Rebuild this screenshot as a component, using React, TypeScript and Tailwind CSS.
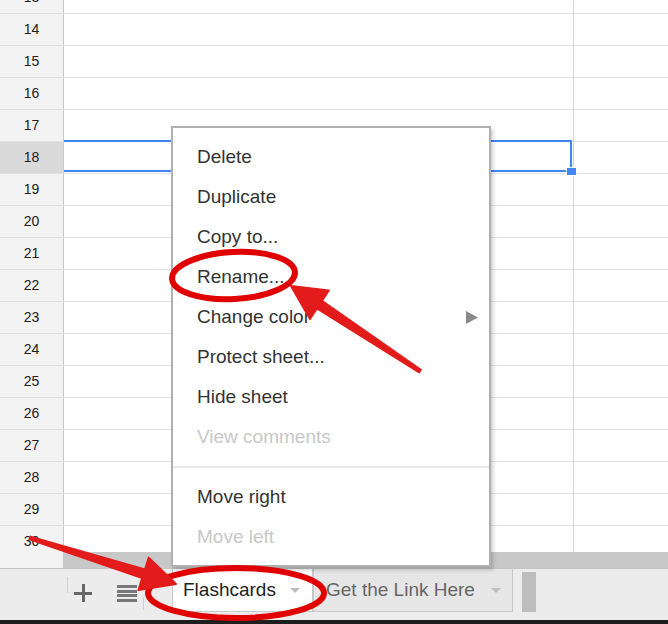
import React from "react";

const rows = Array.from({ length: 18 }, (_, i) => 13 + i);

const menu: { label: string; disabled?: boolean; sub?: boolean }[] = [
  { label: "Delete" },
  { label: "Duplicate" },
  { label: "Copy to..." },
  { label: "Rename..." },
  { label: "Change color", sub: true },
  { label: "Protect sheet..." },
  { label: "Hide sheet" },
  { label: "View comments", disabled: true },
];

const menuBottom = [{ label: "Move right" }, { label: "Move left", disabled: true }];

const Caret = () => (
  <span className="inline-block h-0 w-0 border-x-[5px] border-t-[5px] border-x-transparent border-t-[#bdbdbd]" />
);

const MenuItem = ({ label, disabled, sub }: { label: string; disabled?: boolean; sub?: boolean }) => (
  <div
    className={`flex h-[40px] items-center justify-between pl-[24px] pr-[11px] text-[19px] ${
      disabled ? "text-[#c8c8c8]" : "text-[#333]"
    }`}
  >
    <span>{label}</span>
    {sub && (
      <svg width="12" height="13" viewBox="0 0 12 13">
        <path d="M0 0 L12 6.5 L0 13 Z" fill="#8a8a8a" />
      </svg>
    )}
  </div>
);

export default function App() {
  return (
    <div className="relative h-[624px] w-[668px] overflow-hidden bg-white font-['Liberation_Sans',Arial,sans-serif]">
      {/* grid */}
      <div className="h-[552px] overflow-hidden">
        <div className="-mt-[18px]">
          {rows.map((n) => (
            <div key={n} className="flex h-[32px]">
              <div
                className={`flex w-[64px] shrink-0 items-center justify-center border-b border-r border-b-[#e0e0e0] border-r-[#c9c9c9] text-[14px] text-[#222] ${
                  n === 18 ? "bg-[#dadada]" : "bg-[#f3f3f3]"
                }`}
              >
                {n}
              </div>
              <div className="w-[510px] shrink-0 border-b border-r border-b-[#e2e2e2] border-r-[#d6d6d6]" />
              <div className="flex-1 border-b border-b-[#e2e2e2]" />
            </div>
          ))}
        </div>
      </div>

      {/* selection */}
      <div className="absolute left-[64px] top-[140px] h-[32px] w-[508px] border-y-2 border-r-2 border-[#4285f4]" />
      <div className="absolute left-[566px] top-[167px] h-[9px] w-[11px] border border-white bg-[#4285f4]" />

      {/* horizontal scrollbar */}
      <div className="flex h-[16px]">
        <div className="w-[64px] border-r border-[#c9c9c9] bg-[#f3f3f3]" />
        <div className="flex-1 bg-[#c8c8c8]" />
      </div>

      {/* sheet tabs bar */}
      <div className="flex h-[52px] items-start border-t border-[#c4c4c4] bg-[#ececec]">
        <div className="ml-[67px] mt-[8px] h-[16px] w-px bg-[#d0d0d0]" />
        <div className="relative ml-[6px] mt-[15px] h-[18px] w-[18px]">
          <div className="absolute left-0 top-[8px] h-[3px] w-[18px] bg-[#666]" />
          <div className="absolute left-[8px] top-0 h-[18px] w-[3px] bg-[#666]" />
        </div>
        <div className="ml-[25px] mt-[16px] flex h-[17px] w-[20px] flex-col justify-between">
          <div className="h-[3px] bg-[#777]" />
          <div className="h-[3px] bg-[#777]" />
          <div className="h-[3px] bg-[#777]" />
          <div className="h-[3px] bg-[#777]" />
        </div>
        <div className="ml-[6px] mt-[28px] h-[13px] w-px bg-[#c9c9f2]" />
        <div className="ml-[28px] flex h-[43px] w-[141px] items-center justify-between border-x border-b border-[#c8c8c8] bg-white pl-[10px] pr-[12px] text-[19px] text-[#222]">
          <span>Flashcards</span>
          <Caret />
        </div>
        <div className="flex h-[43px] w-[200px] items-center justify-between border-x border-b border-[#c8c8c8] bg-[#e6e6e6] pl-[12px] pr-[11px] text-[19px] text-[#666]">
          <span>Get the Link Here</span>
          <Caret />
        </div>
        <div className="ml-[9px] mt-[3px] h-[40px] w-[14px] bg-[#bdbdbd]" />
      </div>
      <div className="h-[4px] bg-[#1e1e1e]" />

      {/* context menu */}
      <div className="absolute left-[171px] top-[126px] w-[320px] border-2 border-[#b0b0b0] bg-white pb-[8px] pt-[9px] shadow-[2px_3px_4px_rgba(0,0,0,0.2)]">
        {menu.map((m) => (
          <MenuItem key={m.label} {...m} />
        ))}
        <div className="my-[9px] h-[2px] bg-[#e8e8e8]" />
        {menuBottom.map((m) => (
          <MenuItem key={m.label} {...m} />
        ))}
      </div>

      {/* red annotations */}
      <svg className="pointer-events-none absolute left-0 top-0" width="668" height="624" viewBox="0 0 668 624">
        <ellipse cx="233.5" cy="275.5" rx="61.5" ry="23.5" fill="none" stroke="#e00000" strokeWidth="6" transform="rotate(-3 233.5 275.5)" />
        <ellipse cx="236" cy="593" rx="88" ry="25" fill="none" stroke="#e00000" strokeWidth="6" />
        <polygon
          points="291,286 328.8,290.5 321.9,300.9 420.8,369.7 419.2,372.3 316.9,308.5 310,318.9"
          fill="#e31b1b"
          strokeLinejoin="round"
          stroke="#e31b1b"
          strokeWidth="2"
        />
        <polygon
          points="176,584 138.5,590 142.2,578.1 29.5,539.4 30.5,536.6 145,569.5 148.7,557.6"
          fill="#e31b1b"
          strokeLinejoin="round"
          stroke="#e31b1b"
          strokeWidth="2"
        />
      </svg>
    </div>
  );
}
